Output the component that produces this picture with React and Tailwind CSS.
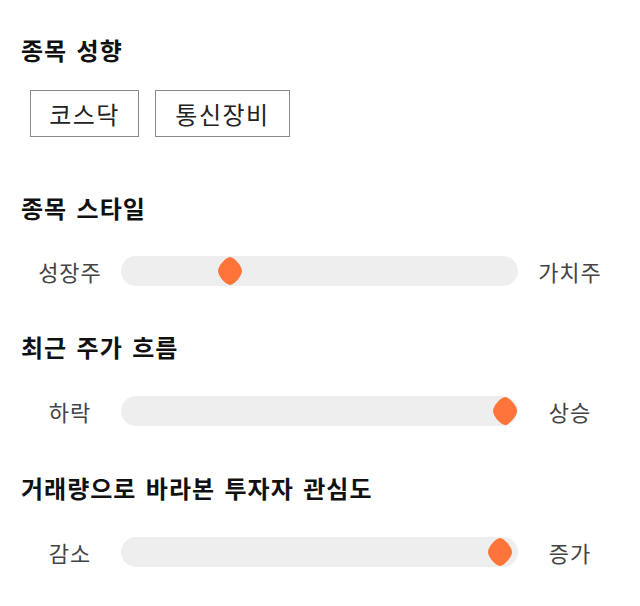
const font = { fontFamily: '"Noto Sans CJK KR", "Noto Sans", sans-serif' };

const Thumb = ({ left }) => (
    <svg
        viewBox="0 0 26 30"
        className="absolute top-1/2 -translate-x-1/2 -translate-y-1/2 w-[26px] h-[30px]"
        style={{ left: `${left}%` }}
    >
        <path
            d="M13 1 C17 1 25 10 25 15 C25 20 17 29 13 29 C9 29 1 20 1 15 C1 10 9 1 13 1 Z"
            fill="#ff7438"
        />
    </svg>
);

const SliderRow = ({ left, right, value, className }) => (
    <div className={`flex items-center ${className}`}>
        <div className="w-[100px] ml-[20px] text-center text-[22px] leading-[30px] tracking-[1px] text-[#444]">{left}</div>
        <div className="relative w-[397px] h-[30px] ml-[1px] rounded-full bg-[#eeeeee]">
            <Thumb left={value} />
        </div>
        <div className="w-[100px] ml-[2px] text-center text-[22px] leading-[30px] tracking-[1px] text-[#444]">{right}</div>
    </div>
);

const Heading = ({ children, className }) => (
    <h2 className={`text-[24px] leading-[28px] tracking-[1px] [word-spacing:3px] font-bold text-[#111] ml-[21px] ${className}`}>{children}</h2>
);

export default function App() {
    return (
        <div className="w-[640px] h-[606px] bg-white pt-[36px]" style={font}>
            <Heading>종목 성향</Heading>
            <div className="flex gap-[16px] ml-[30px] mt-[26px]">
                <button className="w-[109px] h-[47px] border border-[#888] text-[24px] tracking-[1.5px] text-[#222]">코스닥</button>
                <button className="w-[135px] h-[47px] border border-[#888] text-[24px] tracking-[1.5px] text-[#222]">통신장비</button>
            </div>

            <Heading className="mt-[57px]">종목 스타일</Heading>
            <SliderRow className="mt-[34px]" left="성장주" right="가치주" value={27.5} />

            <Heading className="mt-[47px]">최근 주가 흐름</Heading>
            <SliderRow className="mt-[35px]" left="하락" right="상승" value={96.7} />

            <Heading className="mt-[48px]">거래량으로 바라본 투자자 관심도</Heading>
            <SliderRow className="mt-[35px]" left="감소" right="증가" value={95.5} />
        </div>
    );
}
